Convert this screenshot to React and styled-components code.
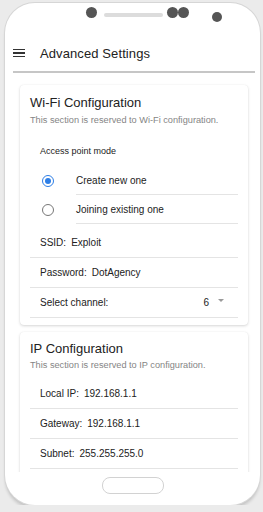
import React from 'react'
import styled, { createGlobalStyle } from 'styled-components'

const Global = createGlobalStyle`
  html, body { margin: 0; padding: 0; background: #ebebeb; }
  body { font-family: "Liberation Sans", Arial, sans-serif; color: #222; }
  #root { padding: 3px 0 0 5px; }
`

const Phone = styled.div`
  width: 255px;
  height: 502px;
  background: #fff;
  border-radius: 30px;
  box-shadow: 0 0 0 1px #d6d6d6, 0 2px 0 #c8c8c8, 0 4px 3px rgba(0,0,0,0.14);
  display: flex;
  flex-direction: column;
  overflow: hidden;
`

const TopBar = styled.div`
  height: 37px;
  flex: none;
  display: flex;
  align-items: flex-start;
  padding: 4px 0 0 81px;
  box-sizing: border-box;
`

const Dot = styled.div`
  width: ${p => p.size || 11}px;
  height: ${p => p.size || 11}px;
  border-radius: 50%;
  background: #555;
  margin-left: ${p => p.gap || 0}px;
  margin-top: ${p => p.top || 0}px;
  flex: none;
`

const Speaker = styled.div`
  width: 59px;
  height: 4px;
  border-radius: 2px;
  background: #dcdcdc;
  margin: 6px 0 0 7px;
`

const Header = styled.div`
  height: 33px;
  flex: none;
  margin: 0 5px 0 8px;
  padding-bottom: 5px;
  display: flex;
  align-items: center;
  gap: 15px;
  border-bottom: 2px solid #c6c6c6;
  box-sizing: border-box;
`

const Burger = styled.div`
  width: 12px;
  display: flex;
  flex-direction: column;
  gap: 2px;
  span { height: 1.5px; background: #333; display: block; }
`

const HeaderTitle = styled.div`
  font-size: 13px;
  letter-spacing: 0.1px;
  color: #222;
`

const Content = styled.div`
  height: 399px;
  flex: none;
  overflow: hidden;
  padding: 12px 0 0 15px;
  box-sizing: border-box;
  display: flex;
  flex-direction: column;
  gap: 7px;
`

const Card = styled.div`
  width: 228px;
  flex: none;
  background: #fff;
  border-radius: 4px;
  box-shadow: 0 1px 3px rgba(0,0,0,0.16), 0 0 1px rgba(0,0,0,0.08);
  padding: ${p => p.top || 10}px 10px 7px 10px;
  box-sizing: border-box;
`

const CardTitle = styled.div`
  font-size: 13px;
  line-height: 16px;
  color: #222;
`

const CardSub = styled.div`
  font-size: 9.2px;
  line-height: 10px;
  color: #858585;
  margin-top: ${p => p.mt || 4}px;
`

const GroupLabel = styled.div`
  font-size: 9px;
  line-height: 12px;
  margin: 20px 0 9px 10px;
  color: #222;
`

const RadioRow = styled.div`
  display: flex;
  align-items: center;
  height: 29px;
  padding-left: 12px;
  gap: 22px;
`

const Radio = styled.div`
  width: 12px;
  height: 12px;
  box-sizing: border-box;
  border-radius: 50%;
  border: 1.5px solid ${p => (p.checked ? '#2d7ee6' : '#777')};
  display: flex;
  align-items: center;
  justify-content: center;
  flex: none;
  &::after {
    content: '';
    width: 6px;
    height: 6px;
    border-radius: 50%;
    background: ${p => (p.checked ? '#2d7ee6' : 'transparent')};
  }
`

const RadioLabel = styled.div`
  flex: 1;
  height: 100%;
  display: flex;
  align-items: center;
  font-size: 10px;
  border-bottom: 1px solid #e4e4e4;
  box-sizing: border-box;
`

const Field = styled.div`
  height: 30px;
  display: flex;
  align-items: center;
  padding: 0 14px 0 10px;
  border-bottom: 1px solid #e4e4e4;
  box-sizing: border-box;
  font-size: 10px;
  margin-top: ${p => p.mt || 0}px;
`

const Value = styled.span`
  margin-left: 5px;
`

const SelectValue = styled.div`
  margin-left: auto;
  display: flex;
  align-items: center;
  gap: 9px;
  font-size: 10px;
`

const Caret = styled.span`
  width: 0;
  height: 0;
  border-left: 3px solid transparent;
  border-right: 3px solid transparent;
  border-top: 3px solid #9a9a9a;
  margin-top: -5px;
`

const Bottom = styled.div`
  flex: 1;
  display: flex;
  justify-content: center;
  padding-top: 5px;
`

const HomeButton = styled.div`
  width: 62px;
  height: 17px;
  border: 1px solid #d2d2d2;
  border-radius: 8px;
  box-sizing: border-box;
`

export default function App() {
  return (
    <>
      <Global />
      <Phone>
        <TopBar>
          <Dot />
          <Speaker />
          <Dot gap={4} />
          <Dot />
          <Dot size={10} gap={23} top={5} />
        </TopBar>
        <Header>
          <Burger><span /><span /><span /></Burger>
          <HeaderTitle>Advanced Settings</HeaderTitle>
        </Header>
        <Content>
          <Card>
            <CardTitle>Wi-Fi Configuration</CardTitle>
            <CardSub>This section is reserved to Wi-Fi configuration.</CardSub>
            <GroupLabel>Access point mode</GroupLabel>
            <RadioRow>
              <Radio checked />
              <RadioLabel>Create new one</RadioLabel>
            </RadioRow>
            <RadioRow>
              <Radio />
              <RadioLabel>Joining existing one</RadioLabel>
            </RadioRow>
            <Field mt={4}>SSID:<Value>Exploit</Value></Field>
            <Field>Password:<Value>DotAgency</Value></Field>
            <Field>
              Select channel:
              <SelectValue>6<Caret /></SelectValue>
            </Field>
          </Card>
          <Card top={9}>
            <CardTitle>IP Configuration</CardTitle>
            <CardSub mt={3}>This section is reserved to IP configuration.</CardSub>
            <Field mt={9}>Local IP:<Value>192.168.1.1</Value></Field>
            <Field>Gateway:<Value>192.168.1.1</Value></Field>
            <Field>Subnet:<Value>255.255.255.0</Value></Field>
            <Field>&nbsp;</Field>
          </Card>
        </Content>
        <Bottom>
          <HomeButton />
        </Bottom>
      </Phone>
    </>
  )
}
